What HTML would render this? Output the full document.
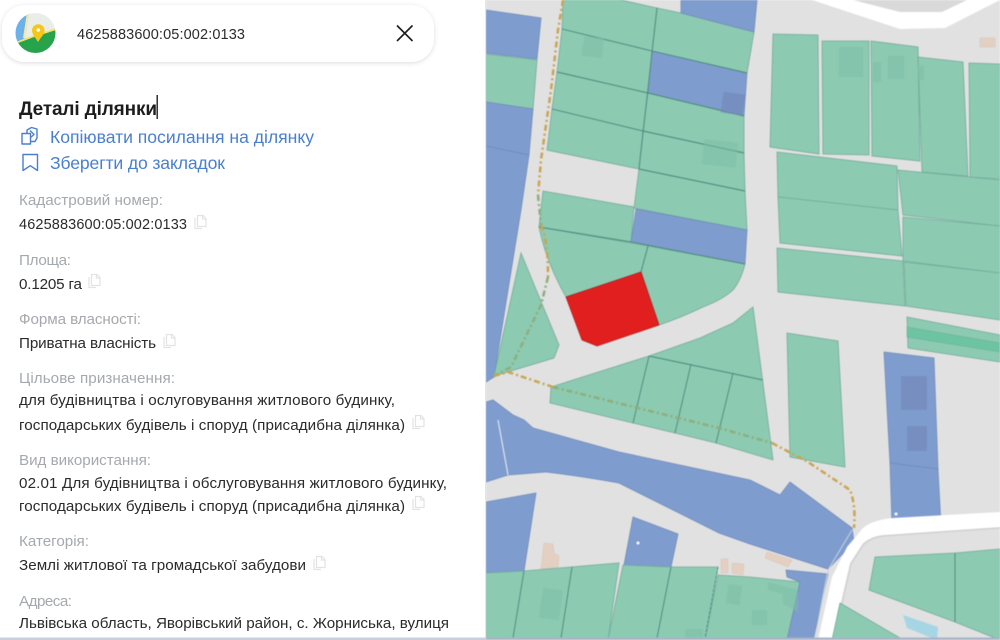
<!DOCTYPE html>
<html lang="uk"><head><meta charset="utf-8"><title>Деталі ділянки</title>
<style>
html,body{margin:0;padding:0;width:1000px;height:640px;overflow:hidden;background:#fff}
svg{position:absolute;left:0;top:0;display:block}
#map{filter:blur(.55px)}
text{font-family:"Liberation Sans","Noto Sans CJK SC",sans-serif;white-space:pre}
.g{fill:#8ccab2;stroke:#74ab9b;stroke-width:.8}
.b{fill:#7f9ccf;stroke:#6f8db8;stroke-width:.8}
.l{fill:#a5a9ad;font-size:15.2px}
.v{fill:#2b2b2b;font-size:15.2px}
.n{fill:#2b2b2b;font-size:14.5px}
.a{fill:#4a7fd0;font-size:17.6px}
.gb{fill:#7dbda6;opacity:.5}
.bb{fill:#7389b8;opacity:.65}
.t{fill:#e3d0c2;stroke:#d8c4b4;stroke-width:.5}
.d1{fill:none;stroke:#c9a552;stroke-width:2.5;stroke-dasharray:6 3 2 3}
.d2{fill:none;stroke:#8fae7c;stroke-width:2.5;stroke-dasharray:6 3 2 3}
.ln{stroke:#4b897c;stroke-width:.9;fill:none}
.ci{fill:none;stroke:#e3e3e3;stroke-width:1.2}
</style></head><body>
<svg id="map" width="1000" height="640" viewBox="0 0 1000 640">
<rect x="486" width="514" height="640" fill="#e1e1e1"/>
<!-- top white road -->
<path d="M853,0L900,13H942L967,0Z" fill="#d9d9d9"/>
<path d="M812,0L900,29L945,28L1000,0H967L942,12H900L853,0Z" fill="#fff"/>
<!-- left column -->
<polygon class="b" points="486,10 541,18 537,59 486,53"/>
<polygon class="g" points="486,54 537,60 533,109 486,102"/>
<polygon class="b" points="486,102 533,109 529,155 486,146"/>
<polygon class="b" points="486,146 529,155 521,210 514,253 494,377 486,382"/>
<!-- centre blocks -->
<polygon class="g" points="563,0 621,0 657,8 652,51 562,29"/>
<polygon class="g" points="562,29 652,51 648,93 557,72"/>
<polygon class="g" points="557,72 648,93 643,131 552,109"/>
<polygon class="g" points="552,109 643,131 639,169 547,150"/>
<polygon class="g" points="657,8 681,13 754,32 747,73 652,51"/>
<polygon class="b" points="681,0 757,0 754,32 681,13"/>
<polygon class="b" points="652,51 747,73 744,116 648,93"/>
<polygon class="g" points="648,93 744,116 744,153 643,131"/>
<polygon class="g" points="643,131 744,153 745,191 639,169"/>
<polygon class="g" points="639,169 745,191 747,230 634,208"/>
<polygon class="g" points="543,191 634,207 631,242 539,227"/>
<polygon class="b" points="636,209 747,230 745,264 631,242"/>
<path class="g" d="M539,227L648,246L641,272L566,297Q546,262 539,227Z"/>
<path class="g" d="M648,246L745,264Q741,280 733,290Q722,300 703,307Q680,318 659,325L641,272Z"/>
<path class="ln" d="M562,29L652,51L747,73M557,72L648,93L744,116M552,109L643,131L744,153M639,169L745,191M657,8L639,169M539,227L631,242L745,264M648,246L641,272"/>
<polygon points="566,297 641,272 659,325 597,346 582,340" fill="#e21f1f" stroke="#b51c1c" stroke-width=".8"/>
<polygon class="g" points="521,253 559,345 554,358 494,376"/>
<polygon class="g" points="753,307 773,460 716,443 675,433 633,423 550,403 551,387 649,356 700,338 733,323"/>
<path class="ln" d="M649,356L763,380M649,356L633,423M691,364L675,433M733,373L716,443"/>
<rect x="583" y="37" width="20" height="20" class="gb" transform="rotate(8 593 47)"/>
<rect x="722" y="93" width="22" height="21" class="bb" transform="rotate(8 733 103)"/>
<rect x="703" y="141" width="34" height="25" class="gb" transform="rotate(6 720 153)"/>
<!-- right blocks -->
<polygon class="g" points="773,34 818,35 819,154 770,147"/>
<polygon class="g" points="822,41 869,41 869,155 823,154"/>
<polygon class="g" points="871,41 918,47 920,161 872,156"/>
<polygon class="g" points="918,57 963,62 968,176 922,172"/>
<polygon class="g" points="969,63 1000,64 1000,179 970,177"/>
<polygon class="g" points="777,152 897,166 898,210 778,197"/>
<polygon class="g" points="778,197 898,210 902,256 780,243"/>
<polygon class="g" points="777,248 903,261 905,306 778,292"/>
<polygon class="g" points="898,170 1000,180 1000,226 903,215"/>
<polygon class="g" points="903,217 1000,226 1000,273 903,261"/>
<polygon class="g" points="904,262 1000,273 1000,320 906,306"/>
<polygon class="g" points="907,317 1000,335 1000,362 908,348"/>
<polygon points="907,327 1000,343 1000,352 907,337" fill="#6cc4a2" stroke="#74ab9b" stroke-width=".6"/>
<polygon class="g" points="787,333 838,341 845,467 790,457"/>
<rect x="839" y="47" width="24" height="30" class="gb"/>
<rect x="873" y="62" width="8" height="20" class="gb"/>
<rect x="888" y="56" width="16" height="23" class="gb"/>
<rect x="918" y="66" width="6" height="14" class="gb"/>
<rect x="980" y="38" width="15" height="9" class="t"/>
<!-- blue right -->
<polygon class="b" points="884,352 934,358 938,469 890,463"/>
<polygon class="b" points="890,463 938,469 941,525 892,525"/>
<rect x="901" y="376" width="26" height="34" class="bb"/>
<rect x="907" y="426" width="20" height="25" class="bb"/>
<circle cx="896" cy="514" r="1.5" fill="#fff"/>
<!-- river blue -->
<path class="b" d="M486,402L493,400L513,415L524,420L533,428L619,452L750,480L780,495L790,482L852,528L854,542L828,569L750,544L719,533L619,483Q580,476 546,472L508,475L486,482Z"/>
<path d="M498,420L508,475" stroke="#f0f0f0" stroke-width="1" fill="none"/>
<polygon class="b" points="486,502 536,493 524,571 486,573"/>
<polygon class="b" points="633,517 678,534 671,567 624,565"/>
<circle cx="638" cy="543" r="1.5" fill="#fff"/>
<polygon class="t" points="544,543 553,544 554,553 559,556 558,567 541,569"/>
<polygon class="t" points="721,559 728,559 728,573 721,573"/>
<polygon class="t" points="732,563 744,564 743,575 732,573"/>
<polygon class="t" points="767,552 792,560 788,567 765,558"/>
<!-- bottom left blocks -->
<polygon class="g" points="486,573 524,571 619,563 608,640 486,640"/>
<polygon class="g" points="623,565 671,567 718,567 705,640 608,640"/>
<polygon class="g" points="718,575 750,577 800,582 787,640 705,640"/>
<polygon class="b" points="786,570 828,574 813,640 787,640 800,582 787,577"/>
<path class="ln" d="M524,571L513,638M572,567L561,638M671,567L657,638"/>
<path d="M718,567L705,638" stroke="#4b897c" stroke-width=".9" stroke-dasharray="3 1.5"/>
<rect x="541" y="589" width="20" height="30" class="gb" transform="rotate(8 551 604)"/>
<rect x="727" y="585" width="14" height="19" class="gb" transform="rotate(8 734 595)"/>
<rect x="685" y="629" width="18" height="11" class="gb"/>
<rect x="752" y="610" width="15" height="15" class="gb"/>
<path d="M768,582l30,8v22l-15,-8v-10l-15,-4z" class="gb"/>
<!-- white road right -->
<path d="M1000,512L893,518Q872,520 863,528L847,547L832,577L818,640H832L850,563L863,543Q872,536 883,535L1000,527Z" fill="#fff"/>
<path d="M1000,528L883,536Q872,537 864,544L851,564L834,640" fill="none" stroke="#cfcfcf" stroke-width="1.2"/>
<path d="M852,530L828,570L815,637" fill="none" stroke="#c9d3e2" stroke-width="1"/>
<polygon class="g" points="875,557 955,553 1000,549 1000,640 955,622 869,590"/>
<path class="ln" d="M955,553L955,622"/>
<polygon class="g" points="840,603 900,638 900,640 832,640"/>
<polygon points="903,615 938,627 937,640 907,628" fill="#a6d5e3"/>
<!-- dashed boundary -->
<path class="d1" d="M563,0L558,30L551,90L541,160L538,195"/>
<path class="d2" d="M538,195L541,225"/>
<path class="d1" d="M541,225Q548,240 548,277"/>
<path class="d2" d="M548,277L541,305L511,367L494,376"/>
<path class="d1" d="M494,376L508,372L553,387"/>
<path class="d2" d="M553,387L719,428L772,443"/>
<path class="d1" d="M772,443L808,462L850,490Q856,505 854,528"/>
<rect x="486" y="637.5" width="514" height="2.5" fill="#aab4c6"/>
</svg>
<svg width="1000" height="640" viewBox="0 0 1000 640">
<defs>
<filter id="sh" x="-5%" y="-30%" width="110%" height="170%"><feDropShadow dx="0" dy="1" stdDeviation="2.5" flood-color="#000" flood-opacity=".14"/></filter>
<clipPath id="lc"><circle cx="35.500" cy="33" r="20"/></clipPath>
<g id="cp" class="ci"><path d="M3.500,1.500h5.500l3,3v8h-8.500z"/><path d="M1,4v10.500h7"/><path d="M8.500,1.500v3.500h3.500"/></g>
</defs>
<rect width="486" height="640" fill="#fff"/>
<rect x="485" width="1.2" height="640" fill="#dbe7f5"/>
<rect y="637.500" width="486" height="2.500" fill="#c7cfdc"/>
<rect x="2" y="5" width="432" height="57" rx="23" fill="#fff" filter="url(#sh)"/>
<g clip-path="url(#lc)">
<rect x="15" y="13" width="41" height="41" fill="#eaeee8"/>
<path d="M15,13H29L25,38L15,44Z" fill="#6db1ea"/>
<path d="M28,13L24,38" stroke="#f7e9a0" stroke-width="2"/>
<path d="M15,44L34,37L56,30V54H15Z" fill="#27a34c"/>
<path d="M15,43L34,36L56,29" stroke="#f6e05e" stroke-width="1.600" fill="none"/>
</g>
<path d="M38,42C35,37 32,34 32,30.500a6.300,6.300 0 0 1 12.600,0C44.600,34 41,37 38,42Z" fill="#f5c61c"/>
<circle cx="38.300" cy="30" r="1.800" fill="#fff"/>
<text x="77" y="39" class="n" textLength="168" lengthAdjust="spacing">4625883600:05:002:0133</text>
<path d="M397,25.500L412.500,41M412.500,25.500L397,41" stroke="#1c1c1c" stroke-width="1.600" fill="none"/>
<text x="19" y="115" font-size="19" font-weight="700" fill="#1d1d1d" textLength="138" lengthAdjust="spacing">Деталі ділянки</text>
<rect x="156.500" y="95" width="1.400" height="24" fill="#222"/>
<g fill="none" stroke="#4a7fd0" stroke-width="1.400" stroke-linejoin="round">
<path d="M22,133.500h8.500v10.500h-8.500z"/>
<path d="M27,133.500v-3.500l4.500,-2.500l5.500,1.500v9l-2,3.500h-4.500"/>
<path d="M30,130.500l4,4l-3.500,3"/>
<path d="M23,154.500h14.500v16l-7.200,-4.800l-7.300,4.800z"/>
</g>
<text x="50" y="143" class="a" textLength="264" lengthAdjust="spacing">Копіювати посилання на ділянку</text>
<text x="50" y="169" class="a" textLength="175" lengthAdjust="spacing">Зберегти до закладок</text>
<text x="19" y="205" class="l" textLength="144" lengthAdjust="spacing">Кадастровий номер:</text>
<text x="19" y="229" class="n" textLength="168" lengthAdjust="spacing">4625883600:05:002:0133</text>
<text x="19" y="265" class="l" textLength="52" lengthAdjust="spacing">Площа:</text>
<text x="19" y="289" class="v" textLength="63" lengthAdjust="spacing">0.1205 га</text>
<text x="19" y="324" class="l" textLength="122" lengthAdjust="spacing">Форма власності:</text>
<text x="19" y="348" class="v" textLength="137" lengthAdjust="spacing">Приватна власність</text>
<text x="19" y="383" class="l" textLength="156" lengthAdjust="spacing">Цільове призначення:</text>
<text x="19" y="405" class="v" textLength="376" lengthAdjust="spacing">для будівництва і ослуговування житлового будинку,</text>
<text x="19" y="430" class="v" textLength="386" lengthAdjust="spacing">господарських будівель і споруд (присадибна ділянка)</text>
<text x="19" y="465" class="l" textLength="132" lengthAdjust="spacing">Вид використання:</text>
<text x="19" y="488" class="v" textLength="428" lengthAdjust="spacing">02.01 Для будівництва і обслуговування житлового будинку,</text>
<text x="19" y="511" class="v" textLength="386" lengthAdjust="spacing">господарських будівель і споруд (присадибна ділянка)</text>
<text x="19" y="546" class="l" textLength="70" lengthAdjust="spacing">Категорія:</text>
<text x="19" y="570" class="v" textLength="287" lengthAdjust="spacing">Землі житлової та громадської забудови</text>
<text x="19" y="606" class="l" textLength="53" lengthAdjust="spacing">Адреса:</text>
<text x="19" y="628" class="v" textLength="430" lengthAdjust="spacing">Львівська область, Яворівський район, с. Жорниська, вулиця</text>
<use href="#cp" x="194" y="214"/>
<use href="#cp" x="88" y="273"/>
<use href="#cp" x="163" y="333"/>
<use href="#cp" x="412" y="414"/>
<use href="#cp" x="412" y="495"/>
<use href="#cp" x="313" y="555"/>
</svg>
</body></html>
